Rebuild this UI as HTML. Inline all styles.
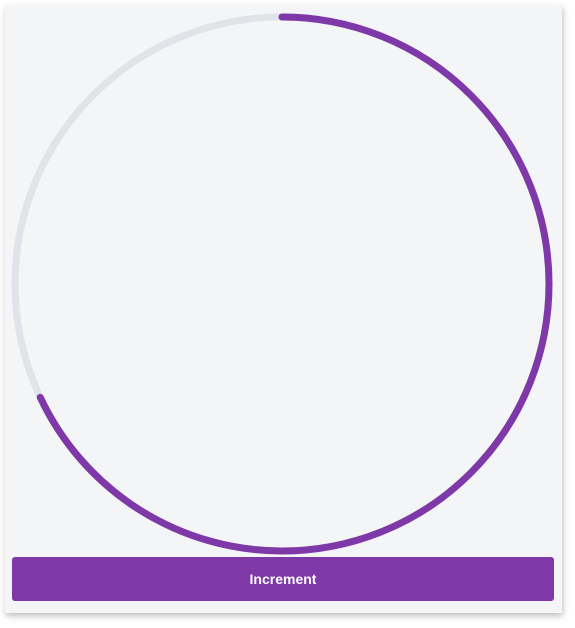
<!DOCTYPE html>
<html><head><style>
html,body{margin:0;padding:0;background:#fff;width:575px;height:628px;overflow:hidden}
.card{position:absolute;left:5px;top:5px;width:557px;height:608px;background:#f4f5f7;box-shadow:1px 3px 6px rgba(0,0,0,0.25)}
.btn{position:absolute;left:12px;top:557px;width:542px;height:44px;background:#7e38a8;border-radius:3px;color:#fff;font:bold 14px "Liberation Sans",sans-serif;display:flex;align-items:center;justify-content:center}
svg{position:absolute;left:0;top:0}
</style></head><body>
<div class="card"></div>
<svg width="575" height="628">
<circle cx="282" cy="284" r="267" fill="none" stroke="#e1e3e8" stroke-width="7"/>
<circle cx="282" cy="284" r="267" fill="none" stroke="#7e38a8" stroke-width="7" stroke-linecap="round" stroke-dasharray="1141 2000" transform="rotate(-90 282 284)"/>
</svg>
<div class="btn">Increment</div>
</body></html>
